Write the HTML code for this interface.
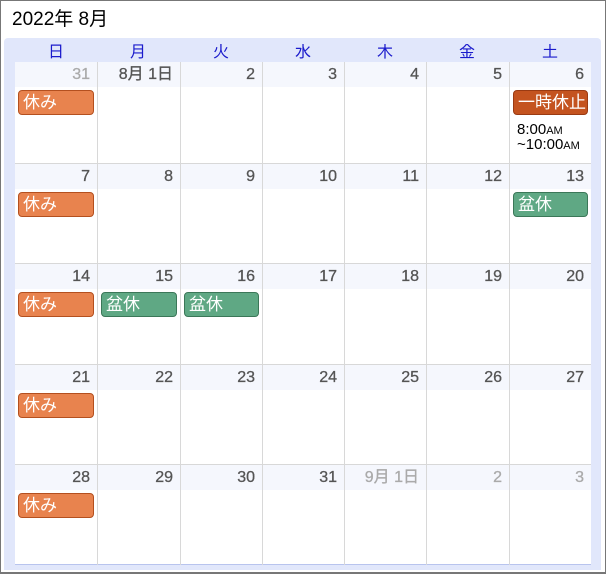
<!DOCTYPE html><html><head><meta charset="utf-8"><style>
*{margin:0;padding:0;box-sizing:border-box}
body{width:606px;height:574px;background:#fff;font-family:"Liberation Sans","Noto Sans CJK JP",sans-serif;position:relative;overflow:hidden}
.outer{position:absolute;left:0;top:0;width:606px;height:574px;border:1px solid #777;border-bottom-width:2px}
.title{position:absolute;left:12px;top:9px;font-size:19px;line-height:22px;color:#000}
.blue{position:absolute;left:4px;top:38px;width:597px;height:532px;background:#e1e7fb;border-radius:4px 4px 0 0}
.hd{position:absolute;top:44px;font-size:16px;line-height:17px;height:17px;color:#1b1bcc;text-align:center;width:82px;overflow:hidden}
.grid{position:absolute;left:15px;top:62px;width:576px;height:503px;background:#fff;border-bottom:1px solid #b8c4ee}
.cell{position:absolute;border-left:1px solid #d8d8d8;border-top:1px solid #d8d8d8}
.num{position:absolute;left:0;right:0;top:0;height:25px;background:#f5f7fd;text-align:right;padding-right:7px;font-size:16px;color:#555;line-height:25px;-webkit-text-stroke:0.3px #555}
.num.g{color:#aaa;-webkit-text-stroke:0.3px #aaa}
.ev{position:absolute;left:3px;right:3px;top:28px;height:25px;border-radius:4px;color:#fff;font-size:17px;line-height:23px;padding-left:4px;border:1px solid}
.o{background:#e8834e;border-color:#b4501f}
.r{background:#c4531f;border-color:#9a3a12}
.gr{background:#5fa884;border-color:#3b7758}
.tm{position:absolute;left:7px;top:61px;font-size:15px;line-height:14px;color:#000}
.tm small{font-size:11px}
</style></head><body>
<div class="outer"></div>
<div class="title">2022年 8月</div>
<div class="blue"></div>
<div class="hd" style="left:15px">日</div><div class="hd" style="left:97px">月</div><div class="hd" style="left:180px">火</div><div class="hd" style="left:262px">水</div><div class="hd" style="left:344px">木</div><div class="hd" style="left:426px">金</div><div class="hd" style="left:509px">土</div>
<div class="grid" id="g"></div>
<script>
var xs=[0,82,165,247,329,411,494,576],ys=[0,101,201,302,402,503];
var d=[["31g","8月 1日","2","3","4","5","6"],["7","8","9","10","11","12","13"],["14","15","16","17","18","19","20"],["21","22","23","24","25","26","27"],["28","29","30","31","9月 1日g","2g","3g"]];
var ev={"0,0":["o","休み"],"0,6":["r","一時休止"],"1,0":["o","休み"],"1,6":["gr","盆休"],"2,0":["o","休み"],"2,1":["gr","盆休"],"2,2":["gr","盆休"],"3,0":["o","休み"],"4,0":["o","休み"]};
var h="";
for(var r=0;r<5;r++)for(var c=0;c<7;c++){var t=d[r][c],g=t.slice(-1)=="g";if(g)t=t.slice(0,-1);
h+='<div class="cell" style="left:'+xs[c]+'px;top:'+ys[r]+'px;width:'+(xs[c+1]-xs[c])+'px;height:'+(ys[r+1]-ys[r])+'px;'+(c==0?'border-left:none;':'')+(r==0?'border-top:none;':'')+'"><div class="num'+(g?' g':'')+'">'+t+'</div>';
var e=ev[r+","+c];if(e)h+='<div class="ev '+e[0]+'">'+e[1]+'</div>';
if(r==0&&c==6)h+='<div class="tm">8:00<small>AM</small><br>~10:00<small>AM</small></div>';
h+='</div>';}
document.getElementById("g").innerHTML=h;
</script>
</body></html>
